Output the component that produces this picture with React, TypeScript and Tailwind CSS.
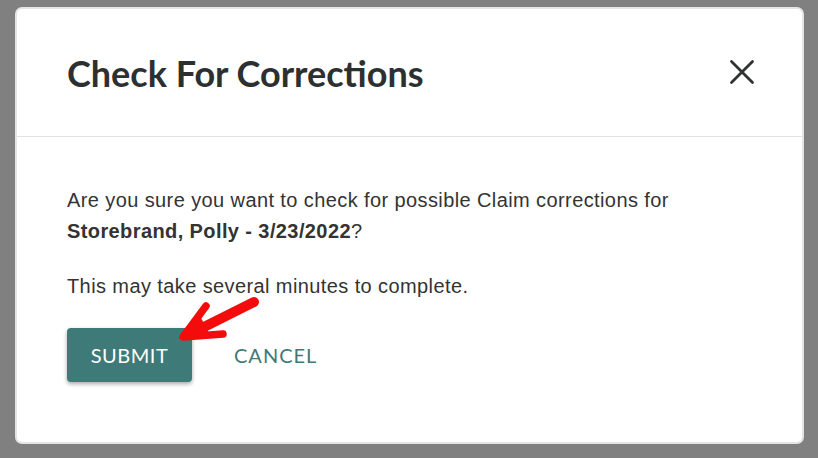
import React from "react"

const teal = "#3e7a78"

function CloseIcon() {
	return (
		<svg width="26" height="26" viewBox="0 0 26 26" fill="none" stroke="#2f3333" strokeWidth="2.8" strokeLinecap="round">
			<path d="M2.5 2.5 L23.5 23.5 M23.5 2.5 L2.5 23.5" />
		</svg>
	)
}

function PointerArrow() {
	return (
		<svg className="pointer-events-none absolute left-0 top-0" width="818" height="458" viewBox="0 0 818 458" fill="none">
			<path d="M254 302 L192 333" stroke="#f40c0c" strokeWidth="10" strokeLinecap="round" />
			<path d="M206 306 L183 337 L223 334" stroke="#f40c0c" strokeWidth="7.5" strokeLinecap="round" strokeLinejoin="round" />
			<path d="M200 316 L183 337 L210 335 Z" fill="#f40c0c" />
		</svg>
	)
}

export default function App() {
	return (
		<div className="relative h-[458px] w-[818px] overflow-hidden bg-[#808080] pl-[15px] pt-[7px]">
			<div className="flex h-[437px] w-[789px] flex-col rounded-[7px] border-2 border-[#e4e4e4] bg-white">
				<div className="flex h-[128px] items-center justify-between border-b border-[#e2e2e2] pl-[50px] pr-[47px]">
					<h1 className="font-['Lato',sans-serif] text-[36px] font-bold text-[#2c3030]">Check For Corrections</h1>
					<button className="mt-[-2px]">
						<CloseIcon />
					</button>
				</div>
				<div className="flex flex-col px-[50px] pt-[48px] font-['Liberation_Sans',Arial,sans-serif] text-[20px] leading-[31px] tracking-[0.4px] text-[#333]">
					<p>
						Are you sure you want to check for possible Claim corrections for
						<br />
						<b>Storebrand, Polly - 3/23/2022</b>?
					</p>
					<p className="mt-[24px]">This may take several minutes to complete.</p>
					<div className="mt-[26px] flex items-center gap-[42px] font-['Lato',sans-serif] text-[20px] tracking-[0.5px]">
						<button className="h-[54px] w-[125px] rounded-[4px] bg-[#3e7a78] text-white shadow-[0_2px_4px_rgba(0,0,0,0.35)]">SUBMIT</button>
						<button className="tracking-[1px]" style={{ color: teal }}>CANCEL</button>
					</div>
				</div>
			</div>
			<PointerArrow />
		</div>
	)
}
